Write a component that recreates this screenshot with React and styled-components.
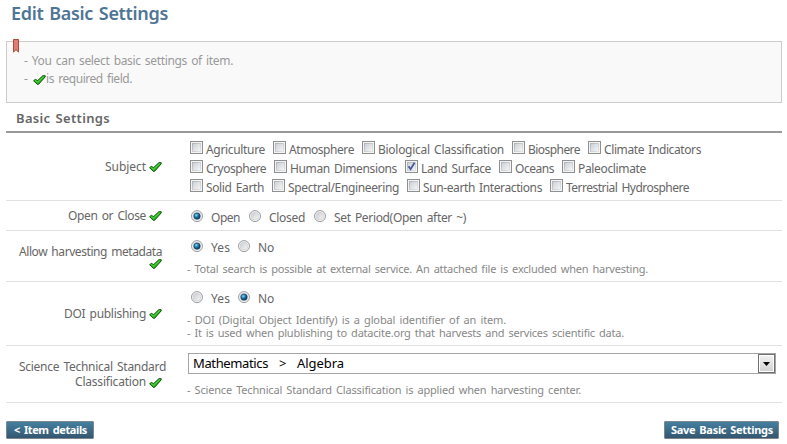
import React, { useLayoutEffect, useRef, useState } from "react";
import styled, { createGlobalStyle } from "styled-components";

const Global = createGlobalStyle`
  * { box-sizing: border-box; }
  body { margin: 0; background: #fff; font-family: "Noto Sans", "Open Sans", sans-serif; font-size: 12px; color: #666; }
  h1, h2, p { margin: 0; font-weight: inherit; font-size: inherit; }
`;

const Text = styled.span`
  display: block;
  flex: none;
  white-space: pre;
  word-spacing: 1.5px;
  width: ${(p) => p.$width}px;
`;

const Letters = styled.span`
  display: inline-block;
  vertical-align: top;
`;

// Spreads its letters so that the line takes exactly `width` pixels.
function Fitted({ width, children }) {
  const ref = useRef(null);
  const [spacing, setSpacing] = useState(0);
  useLayoutEffect(() => {
    const natural = ref.current.getBoundingClientRect().width;
    setSpacing((width - natural) / children.length);
  }, [width, children]);
  return (
    <Text $width={width}>
      <Letters ref={ref} style={{ letterSpacing: spacing }}>{children}</Letters>
    </Text>
  );
}

const Page = styled.main`
  width: 787px;
  height: 444px;
  padding: 0 5px 0 6px;
  overflow: hidden;
`;

const Title = styled.h1`
  height: 41px;
  padding: 0 0 0 5px;
  font-size: 18px;
  line-height: 26px;
  font-weight: 600;
  color: #4f7596;
`;

const Notice = styled.section`
  position: relative;
  height: 62px;
  padding: 10px 0 0 17px;
  border: 1px solid #ccc;
  background: #f9f9f9;
  color: #999;
  line-height: 18px;
`;

const Ribbon = styled.svg`
  position: absolute;
  left: 6px;
  top: -3px;
`;

const NoticeLine = styled.p`
  display: flex;
  height: 18px;
`;

const Heading = styled.h2`
  height: 30px;
  padding: 6px 0 0 10px;
  border-bottom: 2px solid #999;
  font-size: 13px;
  line-height: 18px;
  font-weight: 600;
  color: #666;
`;

const Row = styled.div`
  display: grid;
  grid-template-columns: 160px 1fr;
  column-gap: 21px;
  height: ${(p) => p.$height}px;
  border-bottom: 1px solid #e1e1e1;
`;

const Label = styled.div`
  display: flex;
  flex-direction: column;
  align-items: flex-end;
  padding-top: ${(p) => p.$top}px;
  line-height: 16px;
`;

const LabelLine = styled.div`
  display: flex;
  height: ${(p) => p.$height || 16}px;
  line-height: ${(p) => p.$height || 16}px;
  padding-right: ${(p) => (p.$flush ? 0 : 4)}px;
`;

const Field = styled.div`
  padding-top: ${(p) => p.$top}px;
`;

const CheckMark = styled.svg`
  flex: none;
  width: 13px;
  height: 10px;
  margin: ${(p) => p.$top ?? 3}px 0 0 ${(p) => p.$left ?? 3}px;
`;

const CheckLine = styled.div`
  display: flex;
  height: 19px;
  padding-left: 3px;
`;

const Choice = styled.label`
  display: flex;
  flex: none;
  width: ${(p) => p.$width}px;
  line-height: 16px;
`;

const Box = styled.svg`
  flex: none;
  width: 13px;
  height: 13px;
  margin-right: 3px;
`;

const BoxText = styled.span`
  padding-top: 1px;
`;

const RadioLine = styled.div`
  display: flex;
  height: 16px;
  padding-left: 3px;
`;

const Dial = styled.svg`
  flex: none;
  width: 14px;
  height: 13px;
  margin-right: 7px;
`;

const Hint = styled.div`
  padding-top: ${(p) => p.$top}px;
  font-size: 11px;
  line-height: 13px;
  color: #888;
`;

const Select = styled.div`
  display: flex;
  align-items: stretch;
  width: 588px;
  height: 21px;
  margin-left: 1px;
  padding-left: 4px;
  border: 1px solid #a5a5a5;
  font-size: 13px;
  line-height: 19px;
  color: #000;
`;

const Crumb = styled.span`
  width: ${(p) => p.$width}px;
`;

const Arrow = styled.span`
  display: flex;
  align-items: center;
  justify-content: center;
  width: 17px;
  margin-left: auto;
  border: 1px solid #707070;
  background: linear-gradient(#f2f2f2, #d0d0d0);
  box-shadow: inset 0 0 0 1px #fff;
`;

const Actions = styled.footer`
  display: flex;
  justify-content: space-between;
  padding: 18px 3px 0 0;
`;

const Button = styled.button`
  display: flex;
  width: ${(p) => p.$width}px;
  height: 18px;
  padding: 0 0 0 ${(p) => p.$pad}px;
  border: 1px solid #7d868c;
  border-radius: 1px;
  background: linear-gradient(#4580a0, #345670);
  color: #fff;
  font: 700 11px/15px "Noto Sans", "Open Sans", sans-serif;
`;

const Required = ({ top, left }) => (
  <CheckMark viewBox="0 0 13 10" $top={top} $left={left}>
    <path d="M.6 5.7 2.3 4.4 4.7 5.6 9.8.7h2.4v1.2L5.6 9.3H4.2Z" fill="#2fb722" stroke="#0d560a" strokeWidth="1" strokeLinejoin="round" />
    <path d="M2.2 5.6 4.7 6.9 10.8 1.5" fill="none" stroke="#5fdc4c" strokeWidth=".8" />
  </CheckMark>
);

function Check({ text, width, step, checked }) {
  return (
    <Choice $width={step}>
      <Box viewBox="0 0 13 13">
        <defs>
          <linearGradient id="well" x1="0" y1="0" x2="1" y2="1">
            <stop offset="0" stopColor="#cbcfd5" />
            <stop offset="1" stopColor="#f6f6f6" />
          </linearGradient>
          <linearGradient id="rim" x1="0" y1="0" x2="1" y2="1">
            <stop offset="0" stopColor="#aeb3b9" />
            <stop offset="1" stopColor="#e4e5e7" />
          </linearGradient>
        </defs>
        <rect x=".5" y=".5" width="12" height="12" fill="#f4f4f4" stroke="#8e8f8f" />
        <rect x="2.5" y="2.5" width="8" height="8" fill="url(#well)" stroke="url(#rim)" />
        {checked && <path d="M3.5 6.2 5.6 9.2 9.5 2.8" fill="none" stroke="#44589b" strokeWidth="1.8" />}
      </Box>
      <BoxText><Fitted width={width}>{text}</Fitted></BoxText>
    </Choice>
  );
}

function Radio({ text, width, step, checked }) {
  return (
    <Choice $width={step}>
      <Dial viewBox="0 0 14 13">
        <defs>
          <radialGradient id="dot" cx=".38" cy=".35" r=".65">
            <stop offset="0" stopColor="#9ce0f8" />
            <stop offset=".4" stopColor="#2687b9" />
            <stop offset="1" stopColor="#0b304f" />
          </radialGradient>
          <linearGradient id="dish" x1="0" y1="0" x2="1" y2="1">
            <stop offset="0" stopColor="#c9ccd1" />
            <stop offset="1" stopColor="#f6f6f6" />
          </linearGradient>
        </defs>
        <circle cx="7" cy="6.1" r="5.5" fill="#f9f9f9" stroke="#8e9092" strokeWidth=".9" />
        <circle cx="7" cy="6.1" r="3.9" fill="url(#dish)" stroke="#c6c9cd" strokeWidth=".6" />
        {checked && <circle cx="7" cy="6.1" r="3.2" fill="url(#dot)" stroke="#163e5e" strokeWidth=".6" />}
      </Dial>
      <Fitted width={width}>{text}</Fitted>
    </Choice>
  );
}

const SUBJECTS = [
  [["Agriculture", 59, 83], ["Atmosphere", 65, 89], ["Biological Classification", 126, 150], ["Biosphere", 52, 76], ["Climate Indicators", 97, 113]],
  [["Cryosphere", 60, 84], ["Human Dimensions", 107, 131], ["Land Surface", 70, 94, true], ["Oceans", 39, 63], ["Paleoclimate", 68, 84]],
  [["Solid Earth", 58, 82], ["Spectral/Engineering", 111, 135], ["Sun-earth Interactions", 119, 143], ["Terrestrial Hydrosphere", 123, 139]],
];

export default function App() {
  return (
    <Page>
      <Global />
      <Title><Fitted width={157}>Edit Basic Settings</Fitted></Title>
      <Notice>
        <Ribbon width="6" height="14" viewBox="0 0 6 14">
          <path d="M.5.5h5v12.6L3 10.7.5 13.1Z" fill="#df7b70" stroke="#b0483f" />
        </Ribbon>
        <NoticeLine><Fitted width={209}>- You can select basic settings of item.</Fitted></NoticeLine>
        <NoticeLine>
          <Fitted width={9}>- </Fitted>
          <Required top={5} left={0} />
          <Fitted width={86}>is required field.</Fitted>
        </NoticeLine>
      </Notice>
      <Heading><Fitted width={94}>Basic Settings</Fitted></Heading>

      <Row $height={68}>
        <Label $top={26}>
          <LabelLine><Fitted width={41}>Subject</Fitted><Required /></LabelLine>
        </Label>
        <Field $top={8}>
          {SUBJECTS.map((line) => (
            <CheckLine key={line[0][0]}>
              {line.map(([text, width, step, checked]) => (
                <Check key={text} text={text} width={width} step={step} checked={checked} />
              ))}
            </CheckLine>
          ))}
        </Field>
      </Row>

      <Row $height={30}>
        <Label $top={7}>
          <LabelLine><Fitted width={78}>Open or Close</Fitted><Required /></LabelLine>
        </Label>
        <Field $top={9}>
          <RadioLine>
            <Radio text="Open" width={29} step={58} checked />
            <Radio text="Closed" width={36} step={65} />
            <Radio text="Set Period(Open after ~)" width={132} step={155} />
          </RadioLine>
        </Field>
      </Row>

      <Row $height={51}>
        <Label $top={13}>
          <LabelLine $height={15}><Fitted width={143}>Allow harvesting metadata</Fitted></LabelLine>
          <LabelLine><Required top={0} /></LabelLine>
        </Label>
        <Field $top={9}>
          <RadioLine>
            <Radio text="Yes" width={19} step={47} checked />
            <Radio text="No" width={16} step={40} />
          </RadioLine>
          <Hint $top={6}>
            <Fitted width={461}>- Total search is possible at external service. An attached file is excluded when harvesting.</Fitted>
          </Hint>
        </Field>
      </Row>

      <Row $height={64}>
        <Label $top={24}>
          <LabelLine><Fitted width={82}>DOI publishing</Fitted><Required /></LabelLine>
        </Label>
        <Field $top={9}>
          <RadioLine>
            <Radio text="Yes" width={19} step={47} />
            <Radio text="No" width={16} step={40} checked />
          </RadioLine>
          <Hint $top={6}>
            <Fitted width={319}>- DOI (Digital Object Identify) is a global identifier of an item.</Fitted>
            <Fitted width={437}>- It is used when plublishing to datacite.org that harvests and services scientific data.</Fitted>
          </Hint>
        </Field>
      </Row>

      <Row $height={57}>
        <Label $top={13}>
          <LabelLine $height={15} $flush><Fitted width={147}>Science Technical Standard</Fitted></LabelLine>
          <LabelLine><Fitted width={71}>Classification</Fitted><Required top={4} /></LabelLine>
        </Label>
        <Field $top={7}>
          <Select>
            <Crumb $width={86}><Fitted width={75}>Mathematics</Fitted></Crumb>
            <Crumb $width={18}><Fitted width={7}>&gt;</Fitted></Crumb>
            <Crumb $width={60}><Fitted width={47}>Algebra</Fitted></Crumb>
            <Arrow>
              <svg width="7" height="4" viewBox="0 0 7 4"><path d="M0 0h7L3.5 4Z" fill="#000" /></svg>
            </Arrow>
          </Select>
          <Hint $top={9}>
            <Fitted width={394}>- Science Technical Standard Classification is applied when harvesting center.</Fitted>
          </Hint>
        </Field>
      </Row>

      <Actions>
        <Button $width={88} $pad={7}><Fitted width={73}>{"< Item details"}</Fitted></Button>
        <Button $width={115} $pad={6}><Fitted width={102}>Save Basic Settings</Fitted></Button>
      </Actions>
    </Page>
  );
}
